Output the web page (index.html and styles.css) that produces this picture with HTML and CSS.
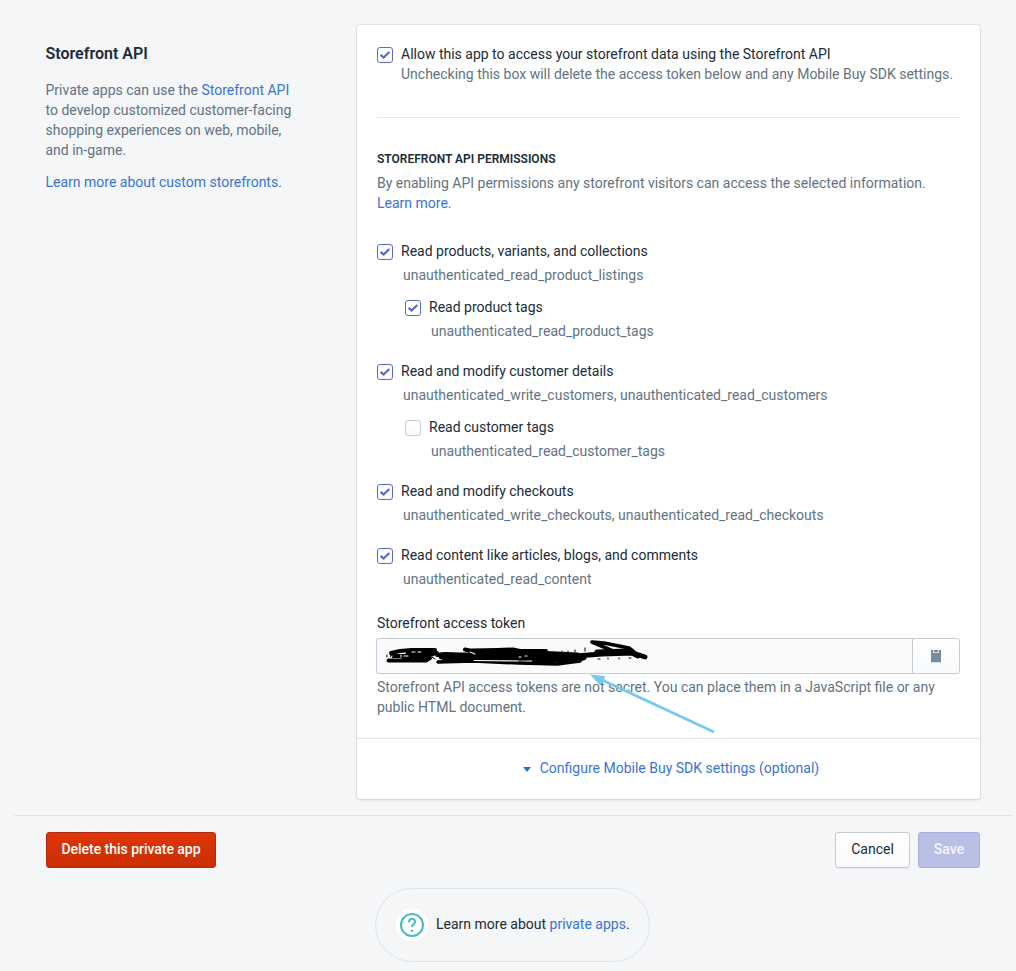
FILE: index.html
```html
<!DOCTYPE html>
<html lang="en">
<head>
<meta charset="utf-8">
<title>Storefront API</title>
<link rel="stylesheet" href="styles.css">
</head>
<body>
<svg class="defs" aria-hidden="true">
  <symbol id="check" viewBox="0 0 16 16"><path d="M3.6 7.9L6.6 10.6L12.3 5" fill="none" stroke="#5c6ac4" stroke-width="2.2"/></symbol>
</svg>
<main class="page">
  <section class="section">
    <aside class="intro">
      <h2>Storefront API</h2>
      <p>Private apps can use the <a>Storefront API</a><br>to develop customized customer-facing<br>shopping experiences on web, mobile,<br>and in-game.</p>
      <p><a>Learn more about custom storefronts.</a></p>
    </aside>
    <div class="card">
      <div class="card-body">
        <div class="option">
          <span class="box checked"><svg><use href="#check"/></svg></span>
          <div>
            <div>Allow this app to access your storefront data using the Storefront API</div>
            <div class="muted">Unchecking this box will delete the access token below and any Mobile Buy SDK settings.</div>
          </div>
        </div>
        <hr class="rule">
        <h3>Storefront API permissions</h3>
        <p class="muted lead">By enabling API permissions any storefront visitors can access the selected information.<br><a>Learn more.</a></p>
        <div class="permissions">
          <div class="option">
            <span class="box checked"><svg><use href="#check"/></svg></span>
            <div><div>Read products, variants, and collections</div><div class="scope">unauthenticated_read_product_listings</div></div>
          </div>
          <div class="option nested">
            <span class="box checked"><svg><use href="#check"/></svg></span>
            <div><div>Read product tags</div><div class="scope">unauthenticated_read_product_tags</div></div>
          </div>
          <div class="option">
            <span class="box checked"><svg><use href="#check"/></svg></span>
            <div><div>Read and modify customer details</div><div class="scope">unauthenticated_write_customers, unauthenticated_read_customers</div></div>
          </div>
          <div class="option nested">
            <span class="box"></span>
            <div><div>Read customer tags</div><div class="scope">unauthenticated_read_customer_tags</div></div>
          </div>
          <div class="option">
            <span class="box checked"><svg><use href="#check"/></svg></span>
            <div><div>Read and modify checkouts</div><div class="scope">unauthenticated_write_checkouts, unauthenticated_read_checkouts</div></div>
          </div>
          <div class="option">
            <span class="box checked"><svg><use href="#check"/></svg></span>
            <div><div>Read content like articles, blogs, and comments</div><div class="scope">unauthenticated_read_content</div></div>
          </div>
        </div>
        <div class="label">Storefront access token</div>
        <div class="token">
          <div class="field">
            <svg class="scribble" width="270" height="34" viewBox="382 639 270 34" fill="none" stroke="#000" stroke-width="4" stroke-linecap="round" stroke-linejoin="round">
              <path d="M391 653L400 651L412 650L435 650M388.500 660.500L426 660.500L430 658M392 656L410 656L437 653" />
              <path d="M408 654L432 654M404 658L428 658" stroke-width="5"/>
              <path d="M437 655L446 654L460 655L475 653L520 654L545 653M465 649.500L472 651L513 649.500L520 651L546 651"/>
              <path d="M442 656L470 656L516 654M472 652L510 652" stroke-width="7"/>
              <path d="M446 659L474 658L530 657M536 654L577 656" stroke-width="7"/>
              <path d="M438 662L473 661L519 663L557 664L580 661" stroke-width="3.6"/>
              <path d="M535 660L577 658L583 657" stroke-width="7"/>
              <path d="M575 656L602 654L633 653L645 657" stroke-width="5"/>
              <path d="M597 652L628 651L638 656" stroke-width="5"/>
              <path d="M613 651L592 642L604 643L629 648L634 652" stroke-width="3.6"/>
              <path d="M474 660.500L518 661" stroke="#f9fafb" stroke-width="1.2"/>
              <path d="M392 656l-1 2m10-3v2m3-1h4M412 652h3m3 0h3M519 657h2m4-1h2M470 652l5 2M603 658h3m5 1h2m5-1h3" stroke="#f9fafb" stroke-width="1.1"/>
              <path d="M387 655v2M432 657l3 2M562 651v1m6-1v1m7-2v2m10-4v3M598 659h2m8-1v1m11-1v1m10-1h2" stroke="#000" stroke-width="1"/>
            </svg>
          </div>
          <div class="copy">
            <svg width="10" height="14" viewBox="0 0 10 14"><path d="M0 1h2v3h6V1h2v12.3H0z" fill="#798c9c"/><path d="M2.6 1.3h1.3a1.2 1.2 0 0 1 2.2 0h1.3v2H2.6z" fill="#798c9c"/></svg>
          </div>
          <svg class="arrow" width="126" height="62" viewBox="590 673 126 62"><path d="M600 679L714 732" stroke="#78caea" stroke-width="2.9"/><path d="M590 674.5L605 676L604 680L600 685.5z" fill="#78caea"/></svg>
        </div>
        <p class="muted help">Storefront API access tokens are not secret. You can place them in a JavaScript file or any<br>public HTML document.</p>
      </div>
      <div class="card-footer"><span class="caret"></span><a>Configure Mobile Buy SDK settings (optional)</a></div>
    </div>
  </section>
  <div class="actions">
    <button class="btn danger">Delete this private app</button>
    <button class="btn cancel">Cancel</button>
    <button class="btn save">Save</button>
  </div>
  <footer class="learn">
    <svg width="32" height="32" viewBox="0 0 32 32"><circle cx="16" cy="16" r="16" fill="#fff"/><circle cx="16" cy="16" r="11" fill="#fff" stroke="#50bcbd" stroke-width="2.1"/><path d="M13.1 13.2c0-4.4 6-4.4 6-.6 0 2.6-3.1 2.4-3.1 5.4" fill="none" stroke="#50bcbd" stroke-width="2.1"/><circle cx="16" cy="21.7" r="1.25" fill="#50bcbd"/></svg>
    <span>Learn more about <a>private apps</a>.</span>
  </footer>
</main>
</body>
</html>
```
FILE: styles.css
```css
* { box-sizing: border-box; }
body { margin: 0; height: 971px; overflow: hidden; background: #f4f6f8; color: #212b36; font: 14px/20px Roboto, sans-serif; }
h2, h3, p { margin: 0; }
a { color: #3a74d1; }
.defs { position: absolute; width: 0; height: 0; }
.page { padding: 25px 4px 0 14px; }
.section { display: flex; align-items: flex-start; padding: 0 32px 0 31.5px; margin-bottom: 16px; }
.intro { width: 311.5px; padding-top: 17px; color: #637381; }
.intro h2 { font-size: 16px; line-height: 24px; font-weight: 600; color: #212b36; margin-bottom: 14px; }
.intro p { margin-bottom: 12px; white-space: nowrap; }
.card { width: 623px; background: #fff; border-radius: 3px; box-shadow: 0 0 0 1px rgba(63, 63, 68, .07), 0 1px 3px rgba(63, 63, 68, .15); }
.card-body { padding: 19px 20px 21px; height: 713px; white-space: nowrap; }
.muted { color: #637381; }
.option { display: flex; gap: 8px; }
.box { flex: none; width: 16px; height: 16px; margin-top: 3px; border: 1px solid #c4cdd5; border-radius: 3px; background: linear-gradient(#fff, #f9fafb); }
.box.checked { border-color: #5c6ac4; background: #fff; }
.box svg { display: block; width: 16px; height: 16px; margin: -1px; }
.rule { border: 0; height: 1px; margin: 33px 0; background: #e6e9ec; }
h3 { font-size: 12px; line-height: 16px; font-weight: 600; text-transform: uppercase; }
.lead { margin: 6px 0 28px; }
.permissions .option { margin-bottom: 20px; }
.permissions .option:has(+ .nested) { margin-bottom: 12px; }
.permissions .nested { margin-left: 28px; }
.scope { margin: 4px 0 0 2px; color: #637381; }
.label { padding-top: 4px; }
.token { position: relative; display: flex; height: 36px; margin: 5px 0 3px -1px; width: 584px; }
.field { flex: 1; border: 1px solid #c4cdd5; border-right: 0; border-radius: 3px 0 0 3px; background: #f9fafb; padding-left: 5px; }
.scribble { display: block; }
.copy { width: 48px; display: flex; align-items: center; justify-content: center; border: 1px solid #c4cdd5; border-radius: 0 3px 3px 0; background: linear-gradient(#fff, #f9fafb); }
.arrow { position: absolute; left: 214px; top: 35px; }
.card-footer { display: flex; align-items: center; justify-content: center; height: 61px; padding-bottom: 2px; border-top: 1px solid #dfe3e8; }
.caret { margin: 3px 9px 0 5px; border: 4.5px solid transparent; border-top: 5px solid #2876c7; border-bottom: 0; }
.actions { display: flex; gap: 8px; padding: 16px 32px 20px; border-top: 1px solid #dfe3e8; }
.btn { height: 36px; font: 500 14px/20px Roboto, sans-serif; border-radius: 3px; padding: 0 0 2px; border: 1px solid; }
.danger { width: 170px; margin-right: auto; color: #fff; border-color: #b02b13; background: linear-gradient(#de3508, #cb2f06); letter-spacing: -.03px; }
.cancel { width: 75px; font-weight: 400; color: #212b36; border-color: #c4cdd5; background: linear-gradient(#fff, #f9fafb); box-shadow: 0 1px 0 rgba(22, 29, 37, .05); }
.save { width: 62px; color: #f4f5fc; border-color: #a9afe3; background: #babfe6; }
.learn { display: flex; align-items: center; width: 275px; height: 74px; margin-left: 361px; padding-left: 20px; gap: 8px; border: 1px solid #dfe3e8; border-radius: 37px; white-space: nowrap; }
.learn span { margin-top: -2px; }
```
